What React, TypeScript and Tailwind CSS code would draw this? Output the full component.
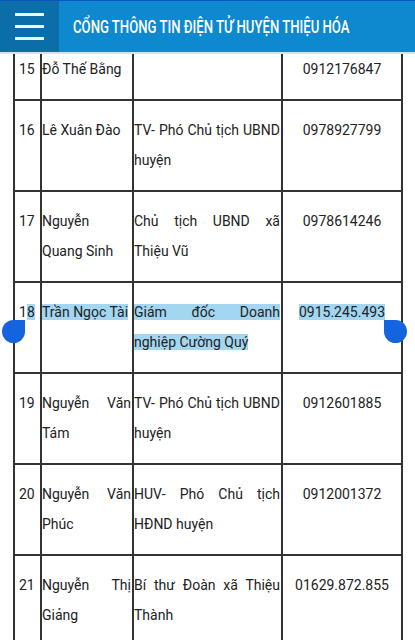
import React from "react";

type Row = {
  no: React.ReactNode;
  name: React.ReactNode;
  role: React.ReactNode;
  phone: React.ReactNode;
};

const Hl = ({ children }: { children: React.ReactNode }) => (
  <span className="bg-[#a3d6f1]">{children}</span>
);

const rows: Row[] = [
  { no: "15", name: "Đỗ Thế Bằng", role: "", phone: "0912176847" },
  { no: "16", name: "Lê Xuân Đào", role: "TV- Phó Chủ tịch UBND huyện", phone: "0978927799" },
  { no: "17", name: "Nguyễn Quang Sinh", role: "Chủ tịch UBND xã Thiệu Vũ", phone: "0978614246" },
  {
    no: (
      <>
        1<Hl>8</Hl>
      </>
    ),
    name: <Hl>Trần Ngọc Tài</Hl>,
    role: <Hl>Giám đốc Doanh nghiệp Cường Quý</Hl>,
    phone: <Hl>0915.245.493</Hl>,
  },
  { no: "19", name: "Nguyễn Văn Tám", role: "TV- Phó Chủ tịch UBND huyện", phone: "0912601885" },
  { no: "20", name: "Nguyễn Văn Phúc", role: "HUV- Phó Chủ tịch HĐND huyện", phone: "0912001372" },
  { no: "21", name: "Nguyễn Thị Giảng", role: "Bí thư Đoàn xã Thiệu Thành", phone: "01629.872.855" },
];

export default function App() {
  return (
    <div className="relative min-h-screen bg-white font-['Roboto',sans-serif] text-[14px] text-[#222]">
      <div className="pt-[38px] pl-[13px]">
        <div className="w-[390px] border-t-2 border-l-2 border-[#333]">
          {rows.map((r, i) => (
            <div key={i} className="flex border-b-2 border-[#333] leading-[30px]">
              <div className="w-[27px] shrink-0 border-r-2 border-[#333] pl-[4px] pt-[14px] pb-[15px]">
                {r.no}
              </div>
              <div className="w-[92px] shrink-0 border-r-2 border-[#333] pr-[1px] pt-[14px] pb-[15px] text-justify">
                {r.name}
              </div>
              <div className="w-[149px] shrink-0 border-r-2 border-[#333] pr-[1px] pt-[14px] pb-[15px] text-justify">
                {r.role}
              </div>
              <div className="w-[120px] shrink-0 border-r-2 border-[#333] pt-[14px] pb-[15px] text-center">
                {r.phone}
              </div>
            </div>
          ))}
        </div>
      </div>

      {/* selection handles */}
      <div className="absolute left-[2px] top-[320px] h-[23px] w-[23px] rounded-full rounded-tr-none bg-[#1464e0]" />
      <div className="absolute left-[384px] top-[320px] h-[23px] w-[23px] rounded-full rounded-tl-none bg-[#1464e0]" />

      {/* fixed header */}
      <div className="absolute inset-x-0 top-0 flex flex-col">
        <div className="h-px bg-[#0b56c0]" />
        <div className="flex h-[51px] bg-[#0e88cf]">
          <div className="flex w-[59px] shrink-0 flex-col items-center justify-center gap-[9px] bg-[#0b6ea9]">
            <div className="h-[3px] w-[29px] bg-[#eef4f8]" />
            <div className="h-[3px] w-[29px] bg-[#eef4f8]" />
            <div className="h-[3px] w-[29px] bg-[#eef4f8]" />
          </div>
          <div className="ml-[14px] flex min-w-0 flex-1 items-center overflow-visible">
            <span className="inline-block origin-left scale-x-[0.73] whitespace-nowrap font-['Roboto',sans-serif] text-[18px] font-medium text-white">
              CỔNG THÔNG TIN ĐIỆN TỬ HUYỆN THIỆU HÓA
            </span>
          </div>
        </div>
        <div className="h-[2px] bg-[#cde6f5]" />
      </div>
    </div>
  );
}
